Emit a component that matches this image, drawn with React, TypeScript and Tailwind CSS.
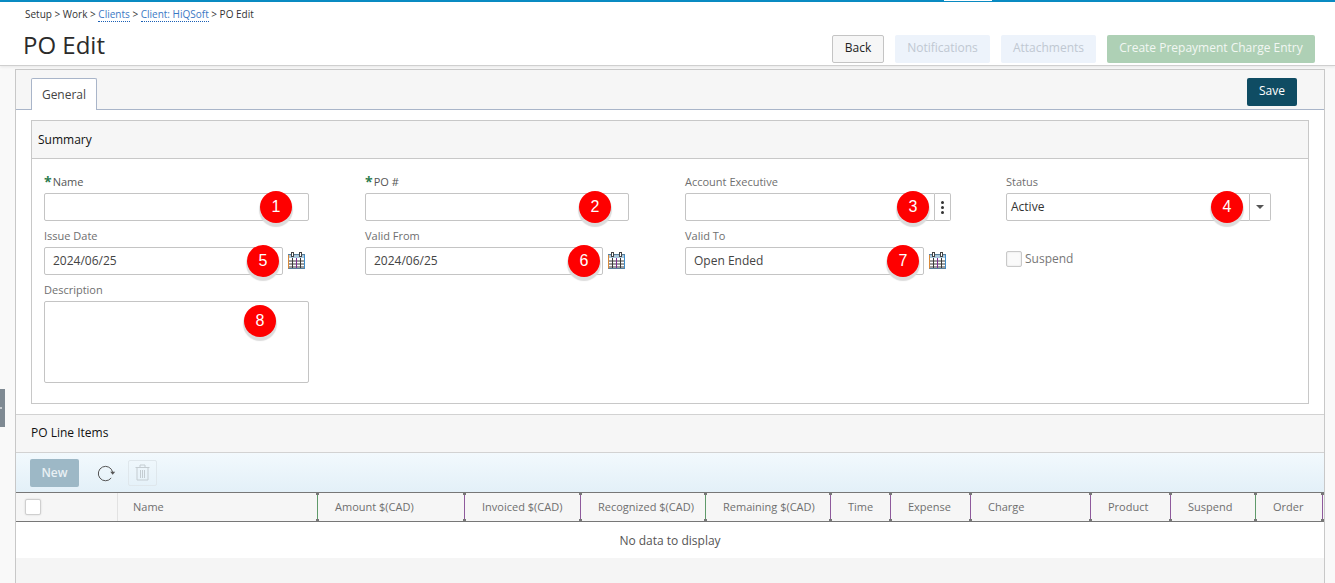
import React from "react";

function Badge({ n, className }: { n: number; className: string }) {
  return (
    <span
      className={`absolute flex h-8 w-8 items-center justify-center rounded-full bg-[#fe0000] font-['Liberation_Sans',sans-serif] text-[16px] text-white shadow-[0_3px_1px_1px_#dcdcdc] ${className}`}
    >
      {n}
    </span>
  );
}

function Label({ text, req, className = "" }: { text: string; req?: boolean; className?: string }) {
  return (
    <div className={`flex h-[22px] items-start pt-[4px] text-[11px] leading-[14px] ${req ? "text-[#555]" : "text-[#6f6f6f]"} ${className}`}>
      {req && <span className="mr-[1px] text-[14px] font-bold leading-[14px] text-[#2e7d4f]">*</span>}
      <span>{text}</span>
    </div>
  );
}

function CalendarIcon() {
  return (
    <svg width="18" height="17" viewBox="0 0 18 17" className="mb-[2px] ml-[5px] shrink-0">
      <rect x="0.5" y="2.5" width="16" height="14" fill="#fff" stroke="#5a7f9c" />
      <path d="M0.5 3v13.5" stroke="#d98a3a" strokeWidth="1" />
      <path d="M16.5 3v13.5" stroke="#3a8ccc" strokeWidth="1" />
      <rect x="1" y="3" width="15" height="3" fill="#a9c6da" />
      <path d="M1 9h15M1 12h15M1 15h15M4.5 6v10M8.5 6v10M12.5 6v10" stroke="#3a3a3a" strokeWidth="1" />
      <path d="M8.5 6v10" stroke="#7a2a90" strokeWidth="1" />
      <rect x="3.5" y="0.5" width="2" height="4" fill="#fff" stroke="#444" strokeWidth="1" />
      <rect x="11.5" y="0.5" width="2" height="4" fill="#fff" stroke="#444" strokeWidth="1" />
    </svg>
  );
}

function DateField({ label, value, badge, badgeCls, widthCls }: { label: string; value: string; badge: number; badgeCls: string; widthCls: string }) {
  return (
    <div>
      <Label text={label} />
      <div className="flex items-center">
        <div className={`relative h-7 rounded-[2px] border border-[#c4c4c4] bg-white pl-[8px] text-[12px] leading-[26px] text-[#444] ${widthCls}`}>
          {value}
          <Badge n={badge} className={badgeCls} />
        </div>
        <CalendarIcon />
      </div>
    </div>
  );
}

const columns: { name: string; w: string; color: string }[] = [
  { name: "Name", w: "w-[200px]", color: "bg-[#5f9a6a]" },
  { name: "Amount $(CAD)", w: "w-[147px]", color: "bg-[#8e5a9c]" },
  { name: "Invoiced $(CAD)", w: "w-[116px]", color: "bg-[#8e5a9c]" },
  { name: "Recognized $(CAD)", w: "w-[125px]", color: "bg-[#5f9a6a]" },
  { name: "Remaining $(CAD)", w: "w-[125px]", color: "bg-[#8e5a9c]" },
  { name: "Time", w: "w-[60px]", color: "bg-[#8e5a9c]" },
  { name: "Expense", w: "w-[80px]", color: "bg-[#8e5a9c]" },
  { name: "Charge", w: "w-[120px]", color: "bg-[#8e5a9c]" },
  { name: "Product", w: "w-[80px]", color: "bg-[#8e5a9c]" },
  { name: "Suspend", w: "w-[85px]", color: "bg-[#5f9a6a]" },
  { name: "Order", w: "w-[67px]", color: "bg-[#8e5a9c]" },
];

export default function App() {
  return (
    <div className="relative h-[583px] w-[1335px] overflow-hidden bg-[#f9f9f9] font-['Open_Sans',sans-serif]">
      {/* top strip */}
      <div className="flex h-[2px] bg-[#0a8cc4]">
        <div className="ml-[944px] h-[1px] w-[48px] bg-white" />
      </div>

      {/* header */}
      <header className="h-[64px] border-b border-[#cfcfcf] bg-white shadow-[0_1px_3px_rgba(0,0,0,0.08)]">
        <div className="flex h-[24px] items-center pl-[25px] text-[10px] text-[#333]">
          <span>Setup &gt; Work &gt;&nbsp;</span>
          <span className="border-b border-dotted border-[#1a5fb4] leading-[14px] text-[#3b78c4]">Clients</span>
          <span>&nbsp;&gt;&nbsp;</span>
          <span className="border-b border-dotted border-[#1a5fb4] leading-[14px] text-[#3b78c4]">Client: HiQSoft</span>
          <span>&nbsp;&gt; PO Edit</span>
        </div>
        <div className="flex items-start justify-between pl-[23px] pr-[20px]">
          <h1 className="-mt-[1px] text-[24px] font-normal leading-[40px] text-[#2b2b2b]">PO Edit</h1>
          <div className="mt-[9px] flex gap-[11px] text-[12px]">
            <button className="h-[28px] w-[52px] rounded-[2px] border border-[#c4c4c4] bg-[#f6f6f6] pb-[2px] text-[#222]">Back</button>
            <button className="h-[28px] w-[95px] rounded-[2px] bg-[#edf3fb] pb-[2px] text-[#c0c8d2]">Notifications</button>
            <button className="h-[28px] w-[95px] rounded-[2px] bg-[#edf3fb] pb-[2px] text-[#c0c8d2]">Attachments</button>
            <button className="h-[28px] w-[208px] rounded-[2px] bg-[#aed0b5] pb-[2px] text-[#f2f7f3]">Create Prepayment Charge Entry</button>
          </div>
        </div>
      </header>

      {/* main panel */}
      <main className="ml-[15px] mt-[3px] h-[600px] w-[1310px] border border-[#c8c8c8] bg-white">
        {/* tab bar */}
        <div className="flex h-[40px] items-end justify-between border-b border-[#a9b5c9] bg-[#f6f6f6] pl-[15px] pr-[27px]">
          <div className="-mb-px h-[32px] w-[66px] rounded-t-[2px] border border-b-0 border-[#a9b5c9] bg-white text-center text-[12px] leading-[32px] text-[#444]">
            General
          </div>
          <button className="mb-[3px] h-[28px] w-[50px] rounded-[2px] bg-[#0f4c63] pb-[2px] text-[12px] text-white">Save</button>
        </div>

        {/* summary */}
        <section className="ml-[15px] mt-[10px] h-[284px] w-[1278px] border border-[#c8c8c8]">
          <div className="flex h-[38px] items-center border-b border-[#c8c8c8] bg-[#f6f6f6] pl-[6px] text-[12px] text-[#111]">
            Summary
          </div>
          <div className="grid grid-cols-[321px_320px_321px_1fr] pl-[12px] pt-[12px]">
            <div>
              <Label text="Name" req />
              <div className="relative h-7 w-[265px] rounded-[2px] border border-[#c4c4c4] bg-white">
                <Badge n={1} className="left-[215px] top-[-3px]" />
              </div>
            </div>
            <div>
              <Label text="PO #" req />
              <div className="relative h-7 w-[264px] rounded-[2px] border border-[#c4c4c4] bg-white">
                <Badge n={2} className="left-[213px] top-[-3px]" />
              </div>
            </div>
            <div>
              <Label text="Account Executive" />
              <div className="flex">
                <div className="relative h-7 w-[250px] rounded-l-[2px] border border-[#c4c4c4] bg-white">
                  <Badge n={3} className="left-[211px] top-[-3px]" />
                </div>
                <div className="flex h-7 w-[16px] flex-col items-center justify-center gap-[2px] rounded-r-[2px] border border-l-0 border-[#c4c4c4] bg-white">
                  <span className="h-[3px] w-[3px] rounded-full bg-[#333]" />
                  <span className="h-[3px] w-[3px] rounded-full bg-[#333]" />
                  <span className="h-[3px] w-[3px] rounded-full bg-[#333]" />
                </div>
              </div>
            </div>
            <div>
              <Label text="Status" />
              <div className="flex">
                <div className="relative h-7 w-[244px] rounded-l-[2px] border border-[#c4c4c4] bg-white pl-[4px] text-[12px] leading-[26px] text-[#333]">
                  Active
                  <Badge n={4} className="left-[204px] top-[-3px]" />
                </div>
                <div className="flex h-7 w-[21px] items-center justify-center rounded-r-[2px] border border-l-0 border-[#c4c4c4] bg-white">
                  <span className="h-0 w-0 border-x-[4px] border-t-[4px] border-x-transparent border-t-[#555]" />
                </div>
              </div>
            </div>

            <div className="mt-[4px]">
              <DateField label="Issue Date" value="2024/06/25" badge={5} badgeCls="left-[202px] top-[-3px]" widthCls="w-[239px]" />
            </div>
            <div className="mt-[4px]">
              <DateField label="Valid From" value="2024/06/25" badge={6} badgeCls="left-[202px] top-[-3px]" widthCls="w-[238px]" />
            </div>
            <div className="mt-[4px]">
              <DateField label="Valid To" value="Open Ended" badge={7} badgeCls="left-[201px] top-[-3px]" widthCls="w-[239px]" />
            </div>
            <div className="mt-[30px] flex items-start">
              <span className="h-4 w-4 rounded-[2px] border border-[#c9c9c9] bg-[#fafafa] shadow-[inset_0_0_2px_rgba(0,0,0,0.12)]" />
              <span className="ml-[3px] text-[12px] leading-[15px] text-[#777]">Suspend</span>
            </div>

            <div className="col-span-4 mt-[4px]">
              <Label text="Description" />
              <div className="relative h-[82px] w-[265px] rounded-[2px] border border-[#c4c4c4] bg-white">
                <Badge n={8} className="left-[199px] top-[3px]" />
              </div>
            </div>
          </div>
        </section>

        {/* PO line items */}
        <section className="mt-[10px]">
          <div className="flex h-[39px] items-center border-y border-[#d2d2d2] bg-[#f6f6f6] pb-[2px] pl-[15px] text-[12px] text-[#111]">
            PO Line Items
          </div>
          <div className="flex h-[39px] items-center bg-gradient-to-b from-[#f2f9fd] to-[#e3f0f8] pl-[14px]">
            <button className="h-[28px] w-[49px] rounded-[2px] bg-[#9db8c6] text-[12px] font-semibold text-[#e9f0f4]">New</button>
            <svg width="20" height="20" viewBox="0 0 20 20" className="ml-[17px]" fill="none">
              <path d="M16.6 9.2A7.2 7.2 0 1 0 15.2 15" stroke="#555" strokeWidth="1" />
              <path d="M14.2 8.8h5l-2.5 3z" fill="#555" />
            </svg>
            <div className="ml-[12px] flex h-[26px] w-[29px] items-center justify-center rounded-[2px] border border-[#dfe7ec]">
              <svg width="15" height="17" viewBox="0 0 15 17" fill="none" stroke="#c4ccd1" strokeWidth="1">
                <path d="M0.5 3.5h14M5 3.5V1h5v2.5M2 3.5V16h11V3.5M5.5 6v8M7.5 6v8M9.5 6v8" />
              </svg>
            </div>
          </div>
          <div className="flex h-[30px] w-[1308px] border-y border-[#777] bg-[#f6f6f6] text-[11px] text-[#6f6f6f]">
            <div className="flex w-[102px] items-center border-r border-[#e2e2e2] pl-[9px]">
              <span className="h-4 w-4 rounded-[2px] border border-[#cfcfcf] bg-white shadow-[0_0_2px_rgba(0,0,0,0.15)]" />
            </div>
            {columns.map((c, i) => (
              <div key={c.name} className={`relative flex items-center ${c.w} ${i === 0 ? "pl-[15px]" : "pl-[17px]"}`}>
                {c.name}
                <span className={`absolute right-0 top-0 h-full w-[1px] ${c.color}`} />
                <span className="absolute right-[-1px] top-0 h-[2px] w-[3px] bg-[#777]" />
                <span className="absolute bottom-0 right-[-1px] h-[2px] w-[3px] bg-[#777]" />
              </div>
            ))}
          </div>
          <div className="flex h-[36px] items-center justify-center pt-[2px] text-[12px] text-[#555]">No data to display</div>
          <div className="h-[40px] bg-[#f5f5f5]" />
        </section>
      </main>

      {/* sidebar handle */}
      <div className="absolute left-0 top-[389px] flex h-[38px] w-[5px] items-center bg-[#7f8a93]">
        <span className="h-[2px] w-[2px] bg-[#c8ccd0]" />
      </div>
    </div>
  );
}
